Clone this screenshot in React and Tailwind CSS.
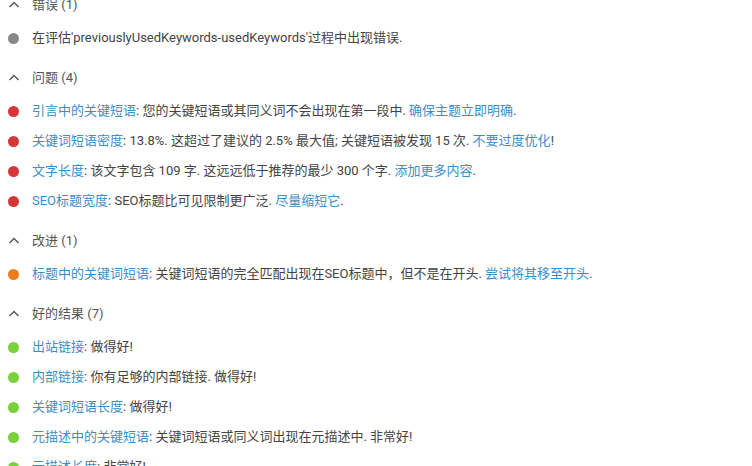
import { useState } from 'react';

const sections = [
  {
    title: '错误 (1)',
    color: 'bg-[#888888]',
    items: [
      { text: "在评估'previouslyUsedKeywords-usedKeywords'过程中出现错误." },
    ],
  },
  {
    title: '问题 (4)',
    color: 'bg-[#d63638]',
    items: [
      { label: '引言中的关键短语', text: ': 您的关键短语或其同义词不会出现在第一段中. ', action: '确保主题立即明确', end: '.' },
      { label: '关键词短语密度', text: ': 13.8%. 这超过了建议的 2.5% 最大值; 关键短语被发现 15 次. ', action: '不要过度优化', end: '!' },
      { label: '文字长度', text: ': 该文字包含 109 字. 这远远低于推荐的最少 300 个字. ', action: '添加更多内容', end: '.' },
      { label: 'SEO标题宽度', text: ': SEO标题比可见限制更广泛. ', action: '尽量缩短它', end: '.' },
    ],
  },
  {
    title: '改进 (1)',
    color: 'bg-[#ee7c1b]',
    items: [
      { label: '标题中的关键词短语', text: ': 关键词短语的完全匹配出现在SEO标题中，但不是在开头. ', action: '尝试将其移至开头', end: '.' },
    ],
  },
  {
    title: '好的结果 (7)',
    color: 'bg-[#7ad03a]',
    items: [
      { label: '出站链接', text: ': 做得好!' },
      { label: '内部链接', text: ': 你有足够的内部链接. 做得好!' },
      { label: '关键词短语长度', text: ': 做得好!' },
      { label: '元描述中的关键短语', text: ': 关键词短语或同义词出现在元描述中. 非常好!' },
      { label: '元描述长度', text: ': 非常好!' },
    ],
  },
];

function Chevron({ open }) {
  return (
    <svg width="12" height="12" viewBox="0 0 12 12" className={open ? '' : 'rotate-180'}>
      <path d="M1.5 8 L6 3.5 L10.5 8" fill="none" stroke="#555" strokeWidth="1.4" />
    </svg>
  );
}

function Section({ section }) {
  const [open, setOpen] = useState(true);
  return (
    <div className="mb-[10px]">
      <button
        onClick={() => setOpen(!open)}
        className="h-[30px] mb-[3px] flex items-center text-[#555] text-[13px]"
      >
        <span className="w-[32px] pl-[8px] flex items-center">
          <Chevron open={open} />
        </span>
        {section.title}
      </button>
      {open && section.items.map((item, i) => (
        <div key={i} className="h-[30px] flex items-center text-[13px] text-[#444] whitespace-nowrap">
          <span className="w-[32px] pl-[8px] flex items-center">
            <span className={`w-[11px] h-[11px] rounded-full ${section.color}`} />
          </span>
          <span>
            {item.label && <a className="text-[#3b8ec6]">{item.label}</a>}
            {item.text}
            {item.action && <a className="text-[#3b8ec6]">{item.action}</a>}
            {item.end}
          </span>
        </div>
      ))}
    </div>
  );
}

export default function App() {
  return (
    <div
      className="w-[752px] h-[466px] overflow-hidden bg-white"
      style={{ fontFamily: 'Roboto, "Noto Sans CJK SC", sans-serif' }}
    >
      <div className="-mt-[10px]">
        {sections.map((s) => (
          <Section key={s.title} section={s} />
        ))}
      </div>
    </div>
  );
}
